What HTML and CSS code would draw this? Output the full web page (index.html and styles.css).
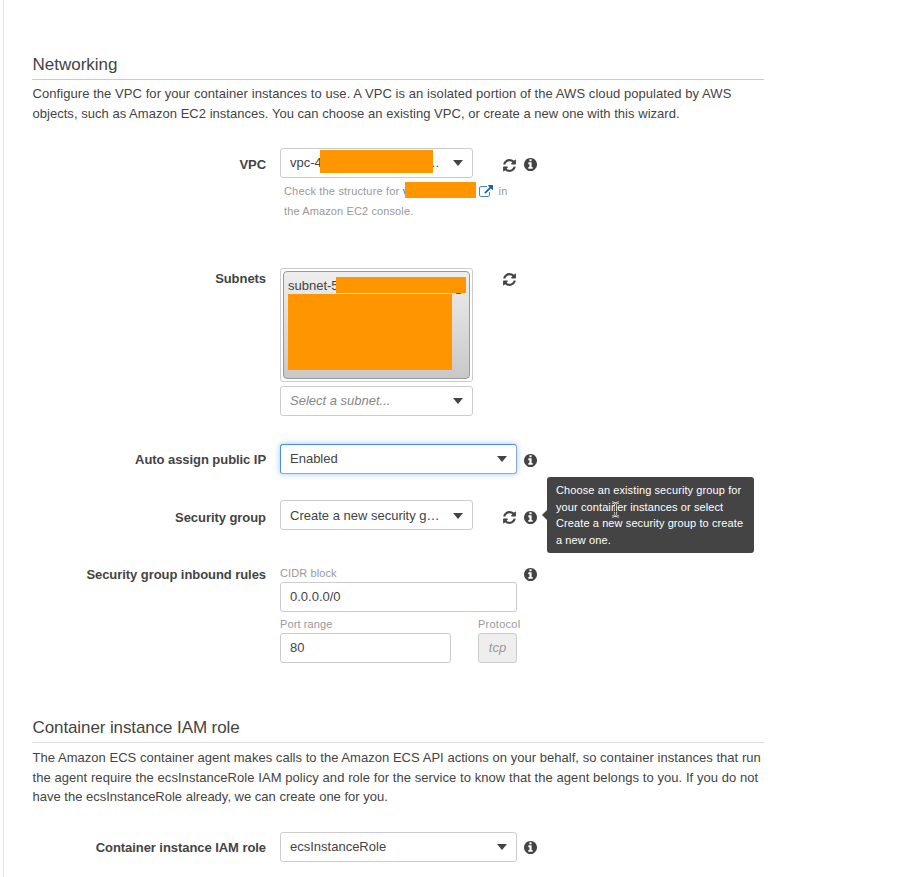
FILE: index.html
```html
<!DOCTYPE html>
<html lang="en">
<head>
<meta charset="utf-8">
<title>Networking</title>
<link rel="stylesheet" href="styles.css">
</head>
<body>
<svg width="0" height="0" class="defs" aria-hidden="true">
  <symbol id="refresh" viewBox="0 0 1792 1792"><path d="M1639 1056q0 5-1 7-64 268-268 434.500t-478 166.500q-146 0-282.500-55t-243.500-157l-129 129q-19 19-45 19t-45-19-19-45v-448q0-26 19-45t45-19h448q26 0 45 19t19 45-19 45l-137 137q71 66 161 102t187 36q134 0 250-65t186-179q11-17 53-117 8-23 30-23h192q13 0 22.500 9.500t9.500 22.500zm25-800v448q0 26-19 45t-45 19h-448q-26 0-45-19t-19-45 19-45l138-138q-148-137-349-137-134 0-250 65t-186 179q-11 17-53 117-8 23-30 23h-199q-13 0-22.500-9.500t-9.500-22.500v-7q65-268 270-434.500t480-166.500q146 0 284 55.500t245 156.500l130-129q19-19 45-19t45 19 19 45z"/></symbol>
  <symbol id="info" viewBox="128 128 1536 1536"><path d="M1152 1376v-160q0-14-9-23t-23-9h-96v-512q0-14-9-23t-23-9h-320q-14 0-23 9t-9 23v160q0 14 9 23t23 9h96v320h-96q-14 0-23 9t-9 23v160q0 14 9 23t23 9h448q14 0 23-9t9-23zm-128-896v-160q0-14-9-23t-23-9h-192q-14 0-23 9t-9 23v160q0 14 9 23t23 9h192q14 0 23-9t9-23zm640 416q0 209-103 385.500t-279.500 279.500-385.500 103-385.500-103-279.500-279.500-103-385.500 103-385.500 279.500-279.500 385.500-103 385.500 103 279.500 279.500 103 385.500z"/></symbol>
  <symbol id="external" viewBox="0 0 1792 1792"><path class="ext-box" d="M1408 928v320q0 119-84.500 203.500t-203.500 84.500h-832q-119 0-203.500-84.500t-84.500-203.500v-832q0-119 84.500-203.500t203.500-84.500h704q14 0 23 9t9 23v64q0 14-9 23t-23 9h-704q-66 0-113 47t-47 113v832q0 66 47 113t113 47h832q66 0 113-47t47-113v-320q0-14 9-23t23-9h64q14 0 23 9t9 23z"/><path d="M1792 64v512q0 26-19 45t-45 19-45-19l-176-176-652 652q-10 10-23 10t-23-10l-114-114q-10-10-10-23t10-23l652-652-176-176q-19-19-19-45t19-45 45-19h512q26 0 45 19t19 45z"/></symbol>
</svg>
<main class="panel">
  <section class="section networking">
    <h2>Networking</h2>
    <p class="intro"><span class="l1">Configure the VPC for your container instances to use. A VPC is an isolated portion of the AWS cloud populated by AWS</span><br><span class="l2">objects, such as Amazon EC2 instances. You can choose an existing VPC, or create a new one with this wizard.</span></p>

    <div class="row row-vpc">
      <div class="label">VPC</div>
      <div class="field">
        <div class="line">
          <div class="select narrow"><span>vpc-4</span><span class="dots">..</span><i class="caret"></i><b class="mask mask-vpc"></b></div>
          <svg class="refresh"><use href="#refresh"/></svg>
        </div>
        <p class="help">Check the structure for <span class="link">v</span><b class="mask mask-link"></b><svg class="external"><use href="#external"/></svg> in<br><span class="help-end">the Amazon EC2 console.</span></p>
      </div>
      <svg class="info"><use href="#info"/></svg>
    </div>

    <div class="row row-subnets">
      <div class="label">Subnets</div>
      <div class="field">
        <div class="line">
          <div class="listbox"><div class="item">subnet-5<i class="tail"></i><b class="mask mask-sub"></b><b class="mask mask-block"></b></div></div>
          <svg class="refresh"><use href="#refresh"/></svg>
        </div>
        <div class="select narrow placeholder"><span>Select a subnet...</span><i class="caret"></i></div>
      </div>
    </div>

    <div class="row row-ip">
      <div class="label">Auto assign public IP</div>
      <div class="field"><div class="select focus"><span>Enabled</span><i class="caret"></i></div></div>
      <svg class="info"><use href="#info"/></svg>
    </div>

    <div class="row row-group">
      <div class="label">Security group</div>
      <div class="field">
        <div class="line">
          <div class="select narrow"><span>Create a new security g…</span><i class="caret"></i></div>
          <svg class="refresh"><use href="#refresh"/></svg>
        </div>
      </div>
      <svg class="info"><use href="#info"/></svg>
      <div class="tooltip">Choose an existing security group for<br>your container instances or select<br>Create a new security group to create<br>a new one.
        <svg class="cursor" viewBox="0 0 9 17"><path class="halo" d="M1 1.500Q4.500 1.500 4.500 4V13Q4.500 15.500 1 15.500M8 1.500Q4.500 1.500 4.500 4V13Q4.500 15.500 8 15.500M3 10.500H6"/><path class="beam" d="M1 1.500Q4.500 1.500 4.500 4V13Q4.500 15.500 1 15.500M8 1.500Q4.500 1.500 4.500 4V13Q4.500 15.500 8 15.500M3 10.500H6"/></svg>
      </div>
    </div>

    <div class="row row-rules">
      <div class="label">Security group inbound rules</div>
      <div class="field">
        <div class="caption">CIDR block</div>
        <div class="input">0.0.0.0/0</div>
        <div class="pair">
          <div class="port"><div class="caption">Port range</div><div class="input">80</div></div>
          <div class="protocol"><div class="caption">Protocol</div><div class="input disabled">tcp</div></div>
        </div>
      </div>
      <svg class="info"><use href="#info"/></svg>
    </div>
  </section>

  <section class="section role">
    <h2>Container instance IAM role</h2>
    <p class="intro"><span class="l3">The Amazon ECS container agent makes calls to the Amazon ECS API actions on your behalf, so container instances that run</span><br><span class="l4">the agent require the ecsInstanceRole IAM policy and role for the service to know that the agent belongs to you. If you do not</span><br><span class="l5">have the ecsInstanceRole already, we can create one for you.</span></p>
    <div class="row row-role">
      <div class="label">Container instance IAM role</div>
      <div class="field"><div class="select"><span>ecsInstanceRole</span><i class="caret"></i></div></div>
      <svg class="info"><use href="#info"/></svg>
    </div>
  </section>
</main>
</body>
</html>
```
FILE: styles.css
```css
* { box-sizing: border-box; }
html, body { height: 100%; }
body {
  margin: 0;
  overflow: hidden;
  background: #fff;
  color: #444;
  font: 13px/19.5px "Liberation Sans", Arial, sans-serif;
}
.defs { position: absolute; }
.panel {
  height: 877px;
  margin-left: 3px;
  padding: 52px 0 0 28px;
  border-left: 1px solid #e4e4e4;
  overflow: hidden;
}
.section { width: 732px; }
.networking { height: 663px; }
h2 {
  height: 28px;
  margin: 0 0 4px;
  padding-left: .5px;
  border-bottom: 1px solid #ccc;
  font-size: 17px;
  line-height: 26px;
  font-weight: 400;
}
.role h2 { border-bottom-color: #ddd; letter-spacing: -.1px; margin-bottom: 5px; }
.intro { margin: 0; padding-left: .5px; white-space: nowrap; }
.l1, .l4 { letter-spacing: .065px; }
.l2 { letter-spacing: .03px; }
.l3 { letter-spacing: .035px; }
.row {
  position: relative;
  display: grid;
  grid-template-columns: 234px 237px 12px;
  column-gap: 14px;
  align-items: start;
}
.label {
  height: 30px;
  line-height: 32px;
  text-align: right;
  font-weight: 700;
  letter-spacing: -.06px;
  white-space: nowrap;
}
.row > .info { margin: 10px 0 0 -7px; }
.info { width: 13px; height: 13px; fill: #444; }
.refresh { width: 15px; height: 15px; margin-top: 10px; fill: #444; }
.line { display: flex; justify-content: space-between; align-items: flex-start; }
.select, .input {
  position: relative;
  display: flex;
  align-items: center;
  height: 30px;
  padding: 0 9px;
  border: 1px solid #ccc;
  border-radius: 3px;
  background: #fff;
  white-space: nowrap;
}
.narrow { width: 193px; }
.caret {
  margin-left: auto;
  border: 5px solid transparent;
  border-top: 6px solid #444;
  border-bottom: 0;
}
.focus { border-color: #4a90e2 #8fa9c6 #8fa9c6 #4a90e2; box-shadow: 0 0 6px #9cc8f8; }
.placeholder { margin-top: 4px; color: #888; font-style: italic; }
.mask { position: absolute; background: #ff9500; }
.dots { margin-left: 110px; }
.mask-vpc { left: 39px; top: 1px; width: 113px; height: 23px; }
.help {
  position: relative;
  margin: 3px 0 0;
  padding-left: 4px;
  color: #999;
  font-size: 11px;
  letter-spacing: .18px;
  line-height: 20px;
  white-space: nowrap;
}
.help-end { letter-spacing: .12px; }
.link { color: #2a6fb5; }
.mask-link { left: 125px; top: 1px; width: 71px; height: 16px; }
.external { width: 14px; height: 14px; margin: 0 2px 0 71px; vertical-align: -4px; fill: #1b62ac; }
.ext-box { fill: #4585c2; }
.listbox {
  width: 193px;
  height: 114px;
  padding: 2px;
  border: 1px solid #ccc;
  border-radius: 3px;
}
.item {
  position: relative;
  height: 108px;
  padding: 4px 4px;
  border: 1px solid #999;
  border-radius: 4px;
  background: linear-gradient(#eee, #c8c8c8);
}
.mask-sub { left: 52px; top: 5px; width: 130px; height: 16px; }
.mask-block { left: 4px; top: 22px; width: 164px; height: 76px; }
.tail { position: absolute; left: 171px; top: 18px; width: 7px; height: 4px; border-bottom: 1px solid #555; border-radius: 50%; }
.row-vpc { height: 120px; margin-top: 25px; }
.row-vpc .label { line-height: 33px; }
.row-subnets { height: 176px; }
.row-subnets .label { line-height: 22px; }
.row-subnets .refresh { margin-top: 4px; }
.row-ip { height: 56px; }
.row-group { height: 64px; }
.row-group .label { line-height: 35px; }
.row-group .select { padding-top: 1px; }
.row-group > .info { margin-top: 11px; }
.row-rules .label { line-height: 22px; }
.row-rules > .info { margin-top: 4px; }
.caption { height: 18px; color: #999; font-size: 11px; letter-spacing: .1px; line-height: 18px; white-space: nowrap; }
.pair { display: flex; justify-content: space-between; margin-top: 3px; }
.port { width: 171px; }
.protocol { width: 39px; }
.protocol .caption { letter-spacing: .25px; }
.disabled { justify-content: center; padding: 0; color: #999; background: #eee; font-style: italic; }
.row-role { margin-top: 25px; }
.row-role > .info { margin-top: 9px; }
.tooltip {
  position: absolute;
  left: 515px;
  top: -23px;
  width: 207px;
  height: 76px;
  padding: 5px 9px;
  border-radius: 3px;
  background: #444;
  color: #fff;
  font-size: 11px;
  letter-spacing: .1px;
  line-height: 16.7px;
  white-space: nowrap;
}
.tooltip::before {
  content: "";
  position: absolute;
  left: -5px;
  top: 33px;
  border: 5px solid transparent;
  border-right-color: #444;
  border-left: 0;
}
.cursor { position: absolute; left: 64px; top: 24px; width: 9px; height: 17px; fill: none; }
.halo { stroke: #fff; stroke-width: 2; }
.beam { stroke: #333; stroke-width: .8; }
```
